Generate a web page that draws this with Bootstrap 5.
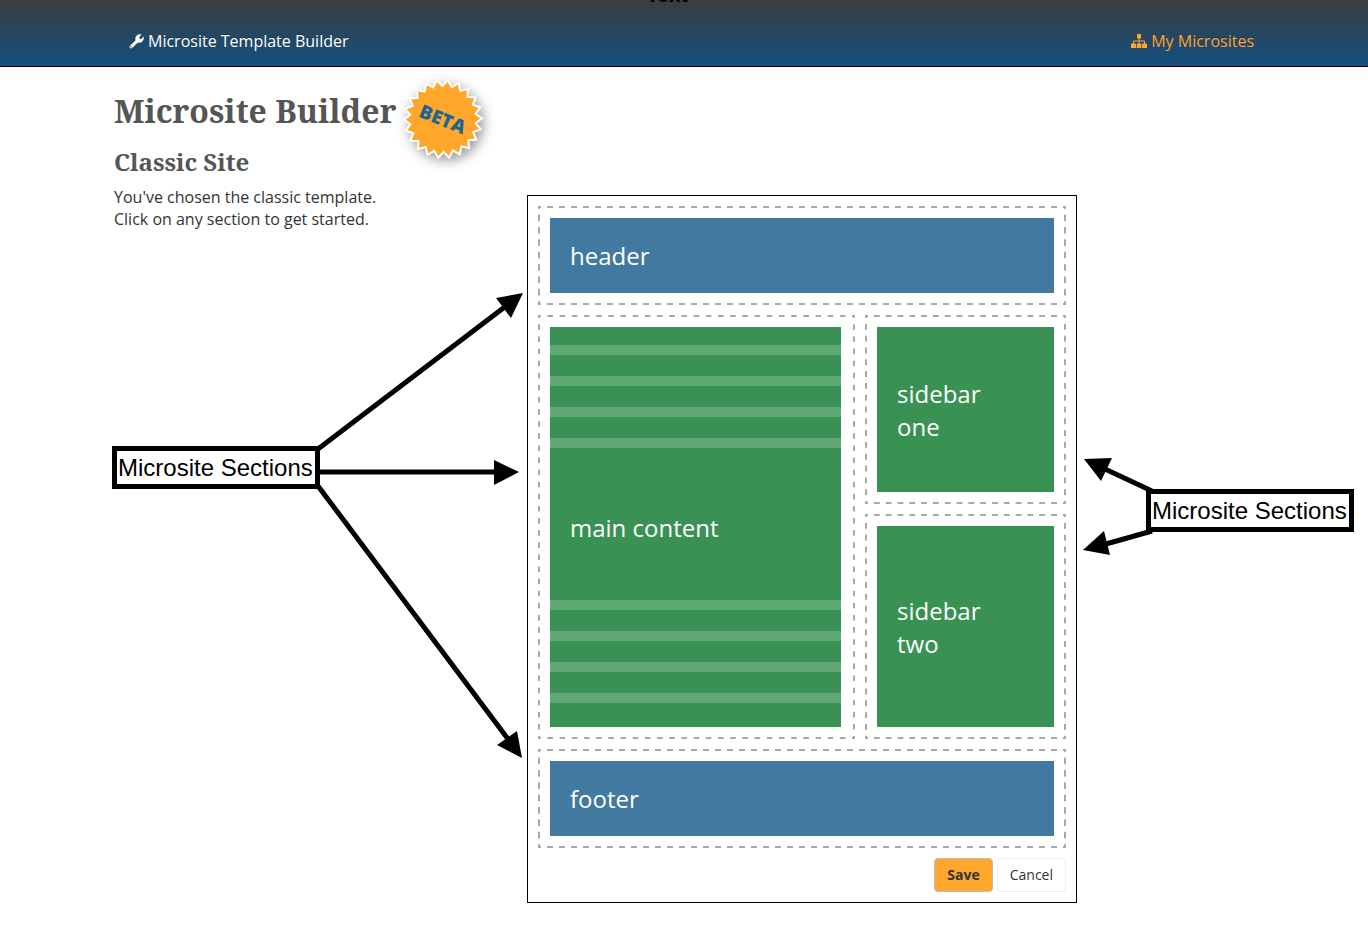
<!DOCTYPE html>
<html lang="en">
<head>
<meta charset="utf-8">
<meta name="viewport" content="width=device-width, initial-scale=1">
<title>Microsite Template Builder</title>
<link href="https://cdn.jsdelivr.net/npm/bootstrap@5.3.0/dist/css/bootstrap.min.css" rel="stylesheet">
<style>
  body { font-family: "Open Sans", sans-serif; font-size: 16px; line-height: 22px; color: #333; background: #fff; overflow-x: hidden; }
  .page-wrap { max-width: 1140px; }
  .topbar { background: linear-gradient(#3c3c3e, #174e7b 90%); border-bottom: 1px solid #000; height: 67px; padding-top: 26px; }
  .topbar a { text-decoration: none; text-shadow: 0 -1px 0 rgba(0,0,0,.25); }
  .brand-link { color: #fff; margin-left: 15px; }
  .sites-link { color: #ffa62b; }
  .clipped-note { left: 646px; top: -17px; color: #000; font: bold 21px/24px "Liberation Sans", sans-serif; }
  h1, h2 { font-family: "Droid Serif", "Noto Serif", "DejaVu Serif", serif; font-weight: 700; color: #555; }
  .page-head { padding: 20px 0 9px; }
  h1 { font-size: 32px; line-height: 48px; }
  h2 { font-size: 24px; line-height: 30px; margin-top: 12px; }
  .beta { left: 100%; top: -23px; margin-left: -8px; overflow: visible; filter: drop-shadow(3px 4px 6px rgba(0,0,0,.4)); }
  .beta text { font-size: 19px; font-weight: 800; fill: #1f6593; }
  .builder { width: 550px; border: 1px solid #000; padding: 10px; margin-top: 9px; }
  .slot {
    --dash: #a9a9a9 0 3px, transparent 3px 9px, #a9a9a9 9px;
    padding: 12px;
    background-image: linear-gradient(90deg, var(--dash)), linear-gradient(90deg, var(--dash)), linear-gradient(var(--dash)), linear-gradient(var(--dash));
    background-size: 12px 2px, 12px 2px, 2px 12px, 2px 12px;
    background-position: 0 0, 0 100%, 0 0, 100% 0;
    background-repeat: round no-repeat, round no-repeat, no-repeat round, no-repeat round;
  }
  .slot-main { width: 317px; padding-right: 14px; }
  .tile { color: #fff; font-size: 24px; line-height: 33px; padding: 0 20px; text-decoration: none; }
  .tile:hover { color: #fff; }
  .tile-blue { background-color: #4279a0; height: 75px; }
  .tile-green { background-color: #399254; }
  .tile-one { height: 165px; }
  .tile-two { height: 201px; }
  .tile-lines {
    --lines: repeating-linear-gradient(#61a877 0 10px, transparent 10px 31px);
    background-image: var(--lines), var(--lines);
    background-size: 100% 103px;
    background-position: 0 18px, 0 calc(100% - 24px);
    background-repeat: no-repeat;
  }
  .gap-slots { gap: 10px; }
  .actions { gap: 4px; }
  .actions .btn { font-size: 14px; line-height: 20px; padding: 6px 12px; border-radius: 4px; color: #333; }
  .actions .btn-save { background: #ffa62b; border-color: #bbb; font-weight: 700; }
  .actions .btn-cancel { background: #fff; border-color: #eee; }
  .callout-label { border: 5px solid #000; padding: 0 2px 0 1px; background: #fff; color: #000; font: 24px/33px "Liberation Sans", Arial, sans-serif; white-space: nowrap; }
  .callout-left { margin: 63px 0 0 -2px; }
  .callout-left .callout-label { margin-top: 153px; }
  .callout-right { margin-top: 267px; }
  .callout-right .callout-label { margin-top: 36px; }
  .arrows { overflow: visible; stroke: #000; stroke-width: 5; }
  .arrows polygon { stroke: none; }
  .side-right { width: 177px; }
</style>
</head>
<body>
<nav class="topbar position-relative overflow-hidden" aria-label="Main">
  <span class="clipped-note position-absolute">Text</span>
  <div class="page-wrap mx-auto d-flex justify-content-between">
    <a class="brand-link d-flex align-items-center gap-1 py-1" href="#">
      <svg width="15" height="15" viewBox="0 0 15 15" fill="currentColor" aria-hidden="true"><path fill-rule="evenodd" d="M8.800 8.400 3.100 14.100Q2 15 .9 14.100 0 13 .9 11.900L6.600 6.200Q5.700 3.600 7.500 1.700 9.600-.2 12.700.6L10.300 3.100 10.600 4.700 12.200 5 14.700 2.600Q15.200 5.500 13.300 7.500 11.400 9.300 8.800 8.400ZM2 12.300a.7.7 0 1 0 .1 0Z"/></svg>
      <span>Microsite Template Builder</span>
    </a>
    <a class="sites-link d-flex align-items-center gap-1 py-1" href="#">
      <svg width="16" height="14" viewBox="0 0 16 14" fill="currentColor" aria-hidden="true"><path d="M6.600 0h2.800q.6 0 .6.600v3.300q0 .6-.6.600H8.500v2H13q1 0 1 1v2h1.400q.6 0 .6.600v3.300q0 .6-.6.600H11.600q-.6 0-.6-.6v-3.300q0-.6.600-.6H13v-2H8.500v2h1.200q.6 0 .6.600v3.300q0 .6-.6.600H6.300q-.6 0-.6-.6v-3.300q0-.6.600-.6H7.500v-2H3v2h1.400q.6 0 .6.600v3.300q0 .6-.6.600H.6q-.6 0-.6-.6v-3.300q0-.6.600-.6H2v-2q0-1 1-1h4.500v-2H6.600q-.6 0-.6-.6V.6q0-.6.600-.6z"/></svg>
      <span>My Microsites</span>
    </a>
  </div>
</nav>

<main class="page-wrap mx-auto">
  <div class="page-head">
    <div class="position-relative d-inline-block align-top">
      <h1 class="mb-0">Microsite Builder</h1>
      <svg class="beta position-absolute" width="110" height="110" viewBox="-55 -55 110 110" role="img" aria-label="Beta">
        <polygon transform="rotate(-1)" fill="#ffa62b" stroke="#fff" stroke-width="2" points="39,0 32.700,4.700 37.400,11 30,13.700 32.800,21.100 24.900,21.600 25.500,29.500 17.800,27.800 16.200,35.500 9.300,31.700 5.500,38.600 0,33 -5.500,38.600 -9.300,31.700 -16.200,35.500 -17.800,27.800 -25.500,29.500 -24.900,21.600 -32.800,21.100 -30,13.700 -37.400,11 -32.700,4.700 -39,0 -32.700,-4.700 -37.400,-11 -30,-13.700 -32.800,-21.100 -24.900,-21.600 -25.500,-29.500 -17.800,-27.800 -16.200,-35.500 -9.300,-31.700 -5.500,-38.600 0,-33 5.500,-38.600 9.300,-31.700 16.200,-35.500 17.800,-27.800 25.500,-29.500 24.900,-21.600 32.800,-21.100 30,-13.700 37.400,-11 32.700,-4.700"/>
        <text transform="rotate(22)" x="0" y="7" text-anchor="middle">BETA</text>
      </svg>
    </div>
    <h2 class="mb-0">Classic Site</h2>
  </div>

  <div class="d-flex align-items-start">
    <div class="flex-grow-1">
      <p class="mb-0">You've chosen the classic template.<br>Click on any section to get started.</p>
      <div class="callout-left d-flex align-items-start">
        <div class="callout-label">Microsite Sections</div>
        <svg class="arrows" width="206" height="466" viewBox="320 293 206 466" aria-hidden="true">
          <path d="M318 449 506 306M318 472H497M318 486 508 739" fill="none"/>
          <polygon points="523,293 496,298 511,318"/>
          <polygon points="519,472 494,460 494,485"/>
          <polygon points="522,758 497,745 517,731"/>
        </svg>
      </div>
    </div>

    <section class="builder flex-shrink-0 d-flex flex-column gap-slots" aria-label="Template sections">
      <div class="slot"><a href="#" class="tile tile-blue d-flex align-items-center">header</a></div>
      <div class="d-flex gap-slots">
        <div class="slot slot-main d-flex"><a href="#" class="tile tile-green tile-lines d-flex align-items-center flex-grow-1">main content</a></div>
        <div class="d-flex flex-column flex-grow-1 gap-slots">
          <div class="slot"><a href="#" class="tile tile-green tile-one d-flex align-items-center">sidebar<br>one</a></div>
          <div class="slot"><a href="#" class="tile tile-green tile-two d-flex align-items-center">sidebar<br>two</a></div>
        </div>
      </div>
      <div class="slot"><a href="#" class="tile tile-blue d-flex align-items-center">footer</a></div>
      <div class="actions d-flex justify-content-end">
        <button type="button" class="btn btn-save">Save</button>
        <button type="button" class="btn btn-cancel">Cancel</button>
      </div>
    </section>

    <div class="side-right flex-shrink-0">
      <div class="callout-right d-flex align-items-start">
        <svg class="arrows flex-shrink-0" width="69" height="100" viewBox="1077 453 69 100" aria-hidden="true">
          <path d="M1152 491 1105 469M1152 531 1106 544" fill="none"/>
          <polygon points="1084,459 1112,458 1101,481"/>
          <polygon points="1083,550 1104,531 1110,555"/>
        </svg>
        <div class="callout-label">Microsite Sections</div>
      </div>
    </div>
  </div>
</main>
<script src="https://cdn.jsdelivr.net/npm/bootstrap@5.3.0/dist/js/bootstrap.bundle.min.js"></script>
</body>
</html>
